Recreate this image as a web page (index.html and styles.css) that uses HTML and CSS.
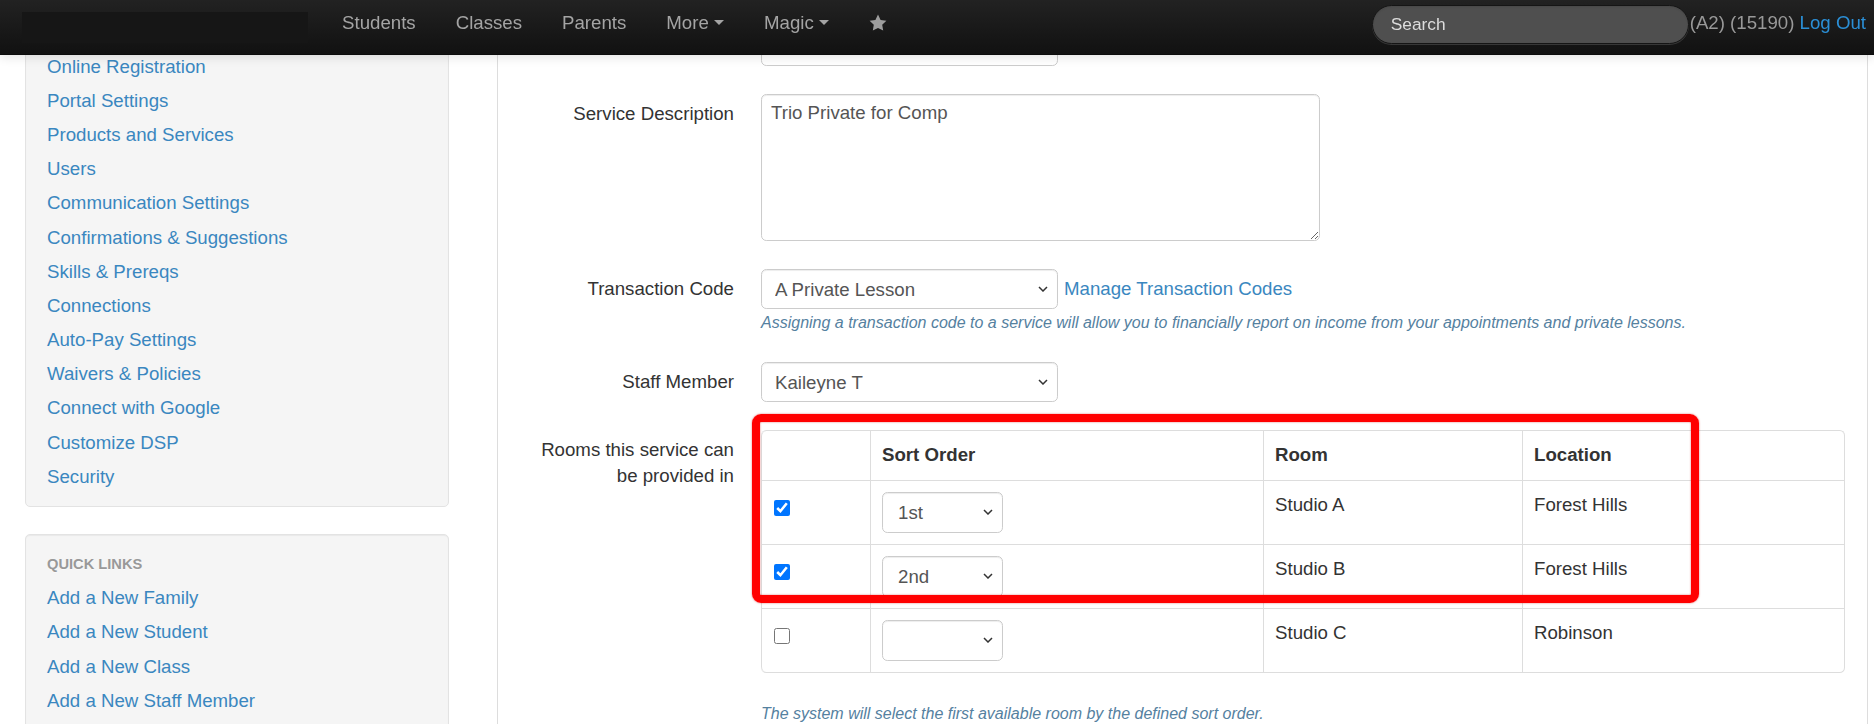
FILE: index.html
```html
<!DOCTYPE html>
<html lang="en">
<head>
    <meta charset="UTF-8">
    <meta name="viewport" content="width=device-width, initial-scale=1.0">
    <title>Edit Service</title>
    <link rel="stylesheet" href="styles.css">
</head>
<body>
    <div class="navbar">
        <a class="brand" href="#"></a>
        <ul class="nav">
            <li><a href="#">Students</a></li>
            <li><a href="#">Classes</a></li>
            <li><a href="#">Parents</a></li>
            <li><a href="#">More <b class="caret"></b></a></li>
            <li><a href="#">Magic <b class="caret"></b></a></li>
            <li>
                <a class="nav-star" href="#">
                    <svg width="18" height="17" viewBox="0 0 18 17"><path d="M9 .6l2.6 5.3 5.8.8-4.2 4.1 1 5.8L9 13.9l-5.2 2.7 1-5.8L.6 6.7l5.8-.8z" fill="#9d9d9d"/></svg>
                </a>
            </li>
        </ul>
        <div class="navbar-right">
            <input class="search-query" type="text" placeholder="Search">
            <span class="navbar-text">(A2) (15190) <a href="#">Log Out</a></span>
        </div>
    </div>

    <div class="page">
        <aside class="sidebar">
            <div class="well">
                <ul class="nav-list">
                    <li><a href="#">Online Registration</a></li>
                    <li><a href="#">Portal Settings</a></li>
                    <li><a href="#">Products and Services</a></li>
                    <li><a href="#">Users</a></li>
                    <li><a href="#">Communication Settings</a></li>
                    <li><a href="#">Confirmations &amp; Suggestions</a></li>
                    <li><a href="#">Skills &amp; Prereqs</a></li>
                    <li><a href="#">Connections</a></li>
                    <li><a href="#">Auto-Pay Settings</a></li>
                    <li><a href="#">Waivers &amp; Policies</a></li>
                    <li><a href="#">Connect with Google</a></li>
                    <li><a href="#">Customize DSP</a></li>
                    <li><a href="#">Security</a></li>
                </ul>
            </div>
            <div class="well">
                <ul class="nav-list">
                    <li class="nav-header">Quick Links</li>
                    <li><a href="#">Add a New Family</a></li>
                    <li><a href="#">Add a New Student</a></li>
                    <li><a href="#">Add a New Class</a></li>
                    <li><a href="#">Add a New Staff Member</a></li>
                </ul>
            </div>
        </aside>

        <main class="content">
            <form class="form-horizontal">
                <div class="control-group">
                    <label class="control-label"></label>
                    <div class="controls">
                        <input class="input-medium" type="text">
                    </div>
                </div>

                <div class="control-group">
                    <label class="control-label">Service Description</label>
                    <div class="controls">
                        <textarea class="input-xlarge">Trio Private for Comp</textarea>
                    </div>
                </div>

                <div class="control-group">
                    <label class="control-label">Transaction Code</label>
                    <div class="controls">
                        <div class="inline-row">
                            <select class="select-medium">
                                <option>A Private Lesson</option>
                            </select>
                            <a href="#">Manage Transaction Codes</a>
                        </div>
                        <p class="help-block">Assigning a transaction code to a service will allow you to financially report on income from your appointments and private lessons.</p>
                    </div>
                </div>

                <div class="control-group">
                    <label class="control-label">Staff Member</label>
                    <div class="controls">
                        <select class="select-medium">
                            <option>Kaileyne T</option>
                        </select>
                    </div>
                </div>

                <div class="control-group">
                    <label class="control-label">Rooms this service can be provided in</label>
                    <div class="controls">
                        <div class="rooms">
                            <table class="table">
                                <thead>
                                    <tr>
                                        <th class="col-check"></th>
                                        <th class="col-order">Sort Order</th>
                                        <th class="col-room">Room</th>
                                        <th>Location</th>
                                    </tr>
                                </thead>
                                <tbody>
                                    <tr>
                                        <td><input type="checkbox" checked></td>
                                        <td><select class="select-small"><option>1st</option></select></td>
                                        <td>Studio A</td>
                                        <td>Forest Hills</td>
                                    </tr>
                                    <tr>
                                        <td><input type="checkbox" checked></td>
                                        <td><select class="select-small"><option>2nd</option></select></td>
                                        <td>Studio B</td>
                                        <td>Forest Hills</td>
                                    </tr>
                                    <tr>
                                        <td><input type="checkbox"></td>
                                        <td><select class="select-small"><option></option></select></td>
                                        <td>Studio C</td>
                                        <td>Robinson</td>
                                    </tr>
                                </tbody>
                            </table>
                            <div class="highlight"></div>
                        </div>
                        <p class="help-block help-bottom">The system will select the first available room by the defined sort order.</p>
                    </div>
                </div>
            </form>
        </main>
    </div>
</body>
</html>
```

FILE: styles.css
```css
* {
    box-sizing: border-box;
}

body {
    margin: 0;
    font-family: "Liberation Sans", Arial, Helvetica, sans-serif;
    font-size: 18.67px;
    line-height: 26.67px;
    color: #333;
    background-color: #fff;
}

a {
    color: #3a87c0;
    text-decoration: none;
}

/* top bar, fixed over the scrolled page */
.navbar {
    position: fixed;
    top: 0;
    left: 0;
    right: 0;
    height: 55px;
    z-index: 10;
    display: flex;
    align-items: flex-start;
    background: linear-gradient(#222, #111);
    border-bottom: 1px solid #0c0c0c;
    box-shadow: 0 2px 10px rgba(0, 0, 0, 0.12);
}

.brand {
    width: 286px;
    height: 31px;
    margin: 12px 14px 0 22px;
    background-color: #161616;
}

.nav {
    display: flex;
    list-style: none;
    margin: 0;
    padding: 0;
}

.nav a {
    display: block;
    padding: 9.67px 20px;
    color: #a4a4a4;
}

.nav .nav-star {
    padding-top: 14px;
}

.nav-star svg {
    display: block;
}

.caret {
    display: inline-block;
    width: 0;
    height: 0;
    vertical-align: middle;
    margin-top: -2px;
    border-top: 5.33px solid #a4a4a4;
    border-left: 5.33px solid transparent;
    border-right: 5.33px solid transparent;
}

.navbar-right {
    margin-left: auto;
    margin-right: 8px;
    display: flex;
    align-items: flex-start;
}

.navbar-right .search-query {
    width: 317px;
    height: 39px;
    margin-top: 5px;
    padding: 0 18px;
    font-family: inherit;
    font-size: 17.33px;
    color: #fff;
    background-color: #4f4f4f;
    border: 1px solid #151515;
    border-radius: 20px;
    box-shadow: inset 0 1px 2px rgba(0, 0, 0, 0.1), 0 1px 0 rgba(255, 255, 255, 0.15);
    outline: none;
}

.search-query::placeholder {
    color: #ddd;
}

.navbar-text {
    margin-left: 1px;
    padding-top: 9.67px;
    color: #999;
}

.navbar-text a {
    color: #2b8fd6;
}

/* page */
.page {
    display: flex;
    align-items: flex-start;
    padding-left: 25px;
}

.sidebar {
    width: 424px;
    flex: none;
    margin-top: 37px;
}

.well {
    background-color: #f5f5f5;
    border: 1px solid #e3e3e3;
    border-radius: 5px;
    box-shadow: inset 0 1px 1px rgba(0, 0, 0, 0.05);
    padding: 12px 0;
    margin-bottom: 27px;
}

.nav-list {
    list-style: none;
    margin: 0;
    padding: 0 21px;
}

.nav-list a {
    display: block;
    padding: 3.75px 0;
}

.nav-header {
    padding: 3.75px 0;
    font-size: 14.67px;
    font-weight: bold;
    text-transform: uppercase;
    color: #999;
    text-shadow: 0 1px 0 rgba(255, 255, 255, 0.5);
}

.content {
    flex: 1;
    margin-left: 48px;
    margin-right: 6px;
    min-height: 780px;
    padding: 26px 22px 40px 23px;
    border: 1px solid #ddd;
    border-top: 0;
}

/* form */
.control-group {
    display: flex;
    margin-bottom: 28px;
}

.control-label {
    width: 213px;
    flex: none;
    padding-top: 6.67px;
    text-align: right;
}

.controls {
    flex: 1;
    margin-left: 27px;
}

input[type="text"],
textarea,
select {
    font-family: inherit;
    font-size: 18.67px;
    color: #555;
    background-color: #fff;
    border: 1px solid #ccc;
    border-radius: 5.33px;
    box-shadow: inset 0 1px 1px rgba(0, 0, 0, 0.075);
}

.input-medium {
    display: block;
    width: 297px;
    height: 40px;
}

textarea {
    display: block;
    width: 559px;
    height: 147px;
    padding: 5.33px 9px;
    line-height: 26.67px;
    margin: 0;
}

select {
    display: block;
    appearance: none;
    -webkit-appearance: none;
    margin: 0;
    background-image: url("data:image/svg+xml,%3Csvg xmlns='http://www.w3.org/2000/svg' width='10' height='6' viewBox='0 0 10 6'%3E%3Cpath d='M1 1l4 4 4-4' fill='none' stroke='%23333' stroke-width='1.5'/%3E%3C/svg%3E");
    background-repeat: no-repeat;
    background-position: right 9px center;
}

.select-medium {
    width: 297px;
    height: 40px;
    padding: 0 30px 0 13px;
}

.select-small {
    width: 121px;
    height: 41px;
    padding: 0 30px 0 15px;
}

.inline-row {
    display: flex;
    align-items: center;
    gap: 6px;
}

.help-block {
    margin: 3px 0 0;
    font-size: 16px;
    line-height: 22px;
    font-style: italic;
    color: #55819f;
}

.help-bottom {
    margin-top: 30px;
}

/* rooms table */
.rooms {
    position: relative;
}

.table {
    width: 100%;
    table-layout: fixed;
    border-collapse: separate;
    border-spacing: 0;
    border: 1px solid #ddd;
    border-left: 0;
    border-radius: 5.33px;
}

.table th,
.table td {
    padding: 11px;
    text-align: left;
    vertical-align: top;
    border-left: 1px solid #ddd;
    border-top: 1px solid #ddd;
}

.table thead th {
    border-top: 0;
    font-weight: bold;
}

.table th:first-child {
    border-top-left-radius: 5.33px;
}

.table tbody tr:last-child td:first-child {
    border-bottom-left-radius: 5.33px;
}

.col-check {
    width: 109px;
}

.col-order {
    width: 393px;
}

.col-room {
    width: 259px;
}

.table input[type="checkbox"] {
    display: block;
    width: 16px;
    height: 16px;
    margin: 8px 0 0 1px;
}

.highlight {
    position: absolute;
    left: -9px;
    top: -16px;
    width: 947px;
    height: 189px;
    border: 8px solid #f00;
    border-radius: 9px;
    box-shadow: 0 0 2px rgba(200, 0, 0, 0.6), inset 0 0 2px rgba(200, 0, 0, 0.6);
    pointer-events: none;
}
```
